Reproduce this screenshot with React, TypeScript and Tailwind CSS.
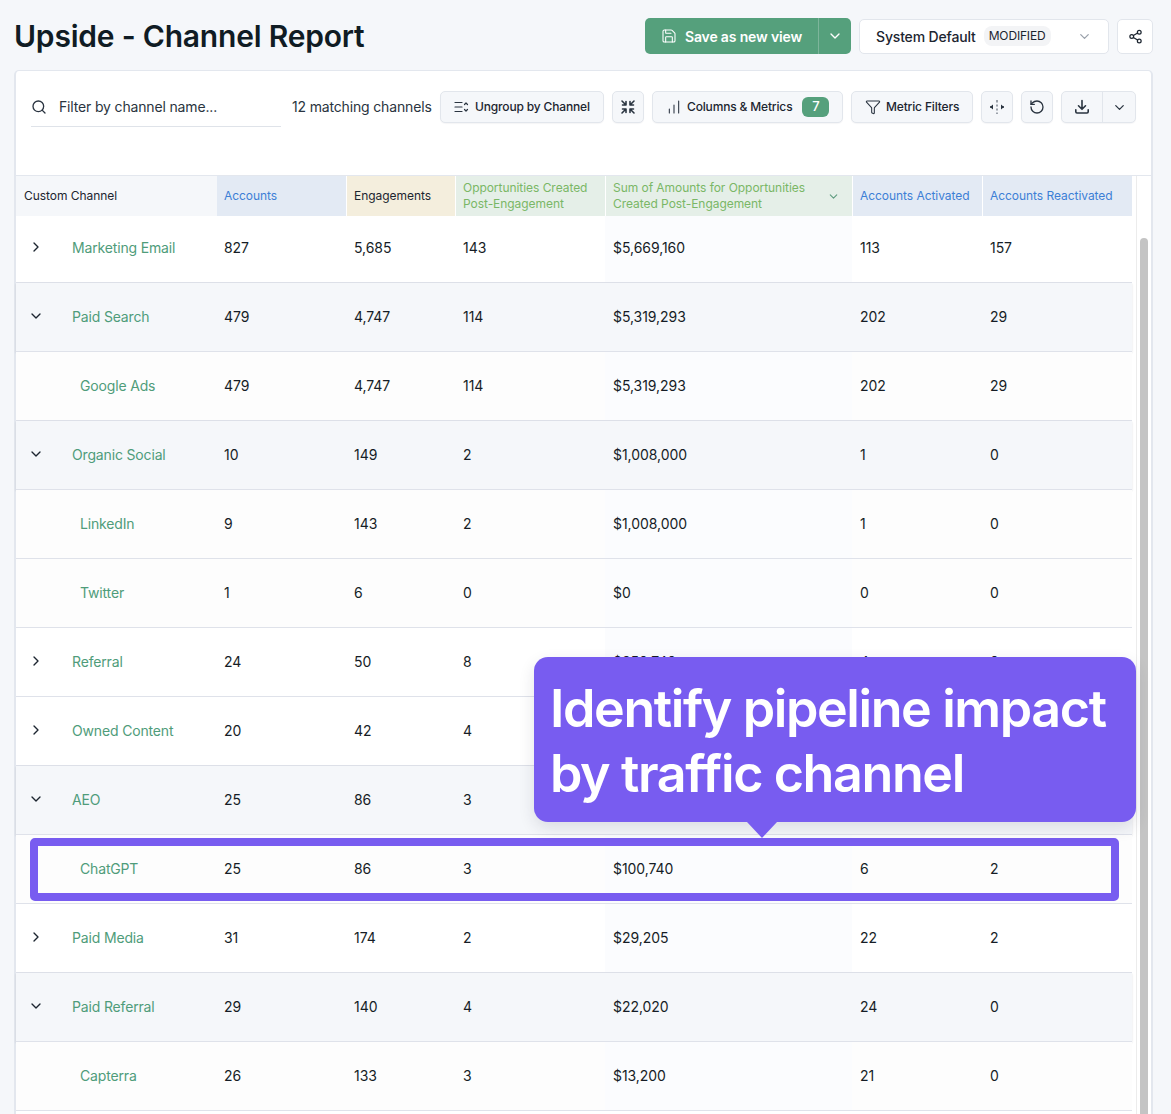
import {
  ChartNoAxesColumnIncreasing,
  ChevronDown,
  ChevronRight,
  Funnel,
  RotateCcw,
  Save,
  Search,
  Share2,
} from "lucide-react";

type Row = {
  name: string;
  kind: "closed" | "open" | "child";
  values: string[];
};

// cells that sit fully behind the callout are left empty
const rows: Row[] = [
  { name: "Marketing Email", kind: "closed", values: ["827", "5,685", "143", "$5,669,160", "113", "157"] },
  { name: "Paid Search", kind: "open", values: ["479", "4,747", "114", "$5,319,293", "202", "29"] },
  { name: "Google Ads", kind: "child", values: ["479", "4,747", "114", "$5,319,293", "202", "29"] },
  { name: "Organic Social", kind: "open", values: ["10", "149", "2", "$1,008,000", "1", "0"] },
  { name: "LinkedIn", kind: "child", values: ["9", "143", "2", "$1,008,000", "1", "0"] },
  { name: "Twitter", kind: "child", values: ["1", "6", "0", "$0", "0", "0"] },
  { name: "Referral", kind: "closed", values: ["24", "50", "8", "$350,740", "4", "0"] },
  { name: "Owned Content", kind: "closed", values: ["20", "42", "4", "", "", ""] },
  { name: "AEO", kind: "open", values: ["25", "86", "3", "", "", ""] },
  { name: "ChatGPT", kind: "child", values: ["25", "86", "3", "$100,740", "6", "2"] },
  { name: "Paid Media", kind: "closed", values: ["31", "174", "2", "$29,205", "22", "2"] },
  { name: "Paid Referral", kind: "open", values: ["29", "140", "4", "$22,020", "24", "0"] },
  { name: "Capterra", kind: "child", values: ["26", "133", "3", "$13,200", "21", "0"] },
];

const cellClasses = [
  "w-[129px] pl-[7px]",
  "w-[109px] pl-[8px]",
  "w-[150px] pl-[8px]",
  "w-[247px] pl-[8px]",
  "w-[130px] pl-[8px]",
  "w-[150px] pl-[8px]",
];

function ToolButton({ className = "", children }: { className?: string; children: React.ReactNode }) {
  return (
    <div
      className={`flex h-[32px] items-center rounded-[5px] border border-[#e2e6ec] bg-[#f5f7fa] text-[12px] font-medium text-[#1c2530] shadow-[0_1px_1px_rgba(20,30,50,0.04)] ${className}`}
    >
      {children}
    </div>
  );
}

function GroupIcon() {
  return (
    <svg width="16" height="16" viewBox="0 0 16 16" fill="none" stroke="#2a3440" strokeWidth="1.2" strokeLinecap="round" strokeLinejoin="round">
      <path d="M2 3.5h7M2 8h7M2 12.5h7" />
      <path d="M11.5 5.5 13 4l1.5 1.5M11.5 10.5 13 12l1.5-1.5" />
    </svg>
  );
}

function CollapseIcon() {
  return (
    <svg width="16" height="16" viewBox="0 0 16 16" fill="none" stroke="#2a3440" strokeWidth="1.6" strokeLinecap="round" strokeLinejoin="round">
      <path d="M2 2l4 4M6 2.5V6H2.5" />
      <path d="M14 2l-4 4M10 2.5V6h3.5" />
      <path d="M2 14l4-4M6 13.5V10H2.5" />
      <path d="M14 14l-4-4M10 13.5V10h3.5" />
    </svg>
  );
}

function SplitIcon() {
  return (
    <svg width="18" height="18" viewBox="0 0 18 18" fill="none">
      <path d="M9 2v2.5M9 6.5v2M9 10.5v2M9 14.5V16" stroke="#6b7480" strokeWidth="1.3" />
      <path d="M2 9h3M14 9h2" stroke="#2a3440" strokeWidth="1.3" />
      <path d="M2 9l3-2.4v4.8zM16 9l-3-2.4v4.8z" fill="#2a3440" />
    </svg>
  );
}

function DownloadIcon() {
  return (
    <svg width="16" height="16" viewBox="0 0 16 16" fill="none" stroke="#2a3440" strokeWidth="1.6" strokeLinecap="round" strokeLinejoin="round">
      <path d="M8 1.5v8.5M4.5 6.8 8 10.3l3.5-3.5" />
      <path d="M1.8 10.8v2a1.2 1.2 0 0 0 1.2 1.2h10a1.2 1.2 0 0 0 1.2-1.2v-2" />
    </svg>
  );
}

function TableRow({ row, index }: { row: Row; index: number }) {
  const shaded = row.kind === "open";
  const child = row.kind === "child";
  return (
    <div
      className={`flex items-center border-b border-[#dfe2ea] ${index === 0 ? "h-[67px]" : "h-[69px]"} ${
        shaded ? "bg-[#f5f7fa] shadow-[0_1px_2px_rgba(30,40,60,0.14)]" : child ? "bg-[#fdfdfd]" : "bg-white"
      }`}
    >
      <div className={`flex h-full w-[201px] items-center ${index === 0 ? "pb-[4px]" : "pb-[2px]"}`}>
        {child ? (
          <span className="pl-[64px] text-[14px] text-[#4f9c7a]">{row.name}</span>
        ) : (
          <>
            <span className="flex w-[56px] justify-center pr-[16px]">
              {row.kind === "open" ? (
                <ChevronDown size={16} color="#1c2530" />
              ) : (
                <ChevronRight size={16} color="#1c2530" />
              )}
            </span>
            <span className="text-[14px] text-[#4f9c7a]">{row.name}</span>
          </>
        )}
      </div>
      {row.values.map((value, i) => (
        <div
          key={i}
          className={`flex h-full items-center text-[14px] tracking-[-0.004em] text-[#161d26] ${index === 0 ? "pb-[4px]" : "pb-[2px]"} ${cellClasses[i]} ${
            i === 3 && !shaded ? "bg-[#fbfcfe]" : ""
          }`}
        >
          {value}
        </div>
      ))}
    </div>
  );
}

export default function App() {
  return (
    <div className="relative h-[1114px] overflow-hidden bg-[#f5f7fa] font-['Inter',sans-serif] tracking-[-0.01em]">
      {/* Title row */}
      <div className="flex h-[70px] items-start justify-between px-[14px] pt-[18px]">
        <h1 className="text-[30px] leading-[36px] font-semibold tracking-[-0.007em] text-[#101c24]">
          Upside - Channel Report
        </h1>
        <div className="mr-[4px] flex items-center gap-[8px]">
          <div className="flex h-[36px] w-[206px] items-center rounded-[5px] bg-[#55a07c] text-white">
            <span className="flex h-full w-[174px] items-center gap-[8px] border-r border-[#7db59b] pl-[16px] text-[14px] font-semibold">
              <Save size={16} strokeWidth={1.6} />
              Save as new view
            </span>
            <span className="flex flex-1 justify-center">
              <ChevronDown size={16} />
            </span>
          </div>
          <div className="flex h-[35px] w-[250px] items-center rounded-[5px] border border-[#e2e6ec] bg-white pl-[16px] text-[14px] font-medium text-[#1c2530]">
            System Default
            <span className="ml-[8px] rounded-[8px] bg-[#f3f4f6] px-[5px] py-[2px] text-[12px] leading-[16px] font-normal">MODIFIED</span>
            <ChevronDown size={15} color="#9aa1ab" className="ml-[26px]" />
          </div>
          <div className="flex h-[35px] w-[36px] items-center justify-center rounded-[5px] border border-[#e2e6ec] bg-white">
            <Share2 size={15} color="#1c2530" />
          </div>
        </div>
      </div>

      {/* Report card */}
      <div className="mr-[18px] ml-[14px] h-[1100px] rounded-t-[5px] border-x-2 border-t border-[#e3e7ee] bg-white">
        <div className="flex h-[104px] items-start pt-[20px] pl-[15px]">
          <div className="flex h-[36px] w-[250px] items-center gap-[12px] border-b border-[#dfe3e9] pb-[4px] text-[14px] text-[#2a3440]">
            <Search size={16} color="#2a3440" />
            Filter by channel name...
          </div>
          <span className="ml-[11px] flex h-[32px] w-[148px] items-center pb-[2px] text-[14px] text-[#2a3440]">12 matching channels</span>
          <div className="flex items-center gap-[8px]">
            <ToolButton className="w-[164px] gap-[6px] pl-[12px]">
              <GroupIcon />
              Ungroup by Channel
            </ToolButton>
            <ToolButton className="w-[32px] justify-center">
              <CollapseIcon />
            </ToolButton>
            <ToolButton className="w-[191px] pl-[13px]">
              <ChartNoAxesColumnIncreasing size={16} color="#2a3440" strokeWidth={1.6} />
              <span className="ml-[5px]">Columns &amp; Metrics</span>
              <span className="ml-[10px] flex h-[20px] w-[27px] items-center justify-center rounded-[6px] bg-[#55a07c] text-[13px] text-white">7</span>
            </ToolButton>
            <ToolButton className="w-[122px] gap-[5px] pl-[13px]">
              <Funnel size={16} color="#2a3440" strokeWidth={1.6} />
              Metric Filters
            </ToolButton>
            <ToolButton className="w-[32px] justify-center">
              <SplitIcon />
            </ToolButton>
            <ToolButton className="w-[32px] justify-center">
              <RotateCcw size={16} color="#2a3440" />
            </ToolButton>
            <ToolButton className="w-[75px]">
              <span className="flex h-full w-[41px] items-center justify-center border-r border-[#e2e6ec]">
                <DownloadIcon />
              </span>
              <span className="flex flex-1 justify-center">
                <ChevronDown size={15} color="#2a3440" />
              </span>
            </ToolButton>
          </div>
        </div>

        <div className="flex border-t border-[#e3e7ee]">
          <div className="w-[1116px]">
            {/* Table header */}
            <div className="flex h-[40px] text-[12px] leading-[16px] tracking-[-0.004em]">
              <div className="flex w-[201px] items-center bg-[#f5f7fa] pl-[8px] text-[#1c2530]">Custom Channel</div>
              <div className="flex w-[129px] items-center bg-[#e3eaf4] pl-[7px] text-[#3d7fd6]">Accounts</div>
              <div className="flex w-[109px] items-center border-l border-white bg-[#f4eedd] pl-[7px] text-[#1c2530]">Engagements</div>
              <div className="flex w-[150px] items-center border-l border-white bg-[#e5efe8] pl-[7px] text-[#7ab766]">
                Opportunities Created Post-Engagement
              </div>
              <div className="flex w-[247px] items-center justify-between border-l border-white bg-[#e5efe8] pr-[12px] pl-[7px] text-[#7ab766]">
                <span className="w-[200px]">Sum of Amounts for Opportunities Created Post-Engagement</span>
                <ChevronDown size={13} color="#5f9c80" />
              </div>
              <div className="flex w-[130px] items-center border-l border-white bg-[#e3eaf4] pl-[7px] text-[#3d7fd6]">Accounts Activated</div>
              <div className="flex w-[150px] items-center border-l border-white bg-[#e3eaf4] pl-[7px] text-[#3d7fd6]">Accounts Reactivated</div>
            </div>
            {rows.map((row, i) => (
              <TableRow key={row.name} row={row} index={i} />
            ))}
          </div>
          <div className="ml-[4px] w-[15px] border-l border-[#ececec] pt-[62px] pl-[3px]">
            <div className="h-[900px] w-[8px] rounded-t-[4px] bg-[#c4c4c4]" />
          </div>
        </div>
      </div>

      {/* Callout over the table */}
      <div className="absolute top-[838px] left-[30px] h-[63px] w-[1089px] rounded-[5px] border-[8px] border-[#785cf0]" />
      <div className="absolute top-[657px] left-[534px] h-[165px] w-[602px] rounded-[14px] bg-[#785cf0] pt-[19px] pl-[16px] text-[52px] leading-[65px] font-semibold tracking-[-0.027em] text-white shadow-[0_6px_16px_rgba(30,30,60,0.12)]">
        Identify pipeline impact
        <br />
        by traffic channel
        <div className="absolute top-full left-[213px] h-0 w-0 border-x-[15.5px] border-t-[16px] border-x-transparent border-t-[#785cf0]" />
      </div>
    </div>
  );
}
